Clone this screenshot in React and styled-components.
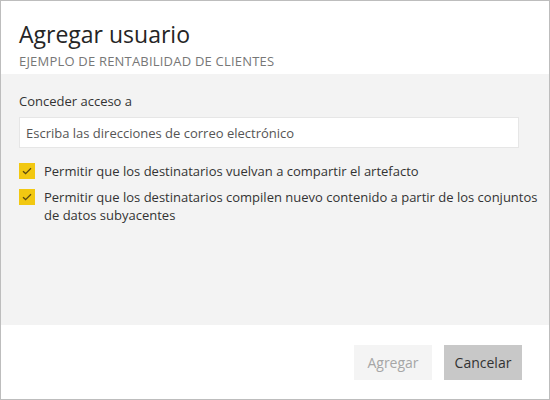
import React from 'react'
import styled, { createGlobalStyle } from 'styled-components'

const GlobalStyle = createGlobalStyle`
  html, body {
    margin: 0;
    padding: 0;
    background: #ffffff;
  }
  body {
    font-family: "Segoe UI", "Open Sans", "Noto Sans", sans-serif;
  }
`

const Dialog = styled.div`
  width: 550px;
  height: 400px;
  box-sizing: border-box;
  border: 1px solid #bdbdbd;
  background: #ffffff;
  display: flex;
  flex-direction: column;
`

const Header = styled.header`
  height: 73px;
  padding: 18px 18px 0;
  box-sizing: border-box;
`

const Title = styled.h1`
  margin: 0;
  font-size: 23px;
  font-weight: 400;
  line-height: 30px;
  color: #252525;
`

const Subtitle = styled.div`
  margin-top: 4px;
  font-size: 13px;
  letter-spacing: 0.2px;
  line-height: 16px;
  color: #777777;
  text-transform: uppercase;
`

const Body = styled.section`
  height: 251px;
  background: #f3f3f3;
  padding: 18px 4px 0 18px;
  box-sizing: border-box;
`

const Label = styled.div`
  font-size: 13px;
  line-height: 18px;
  color: #333333;
`

const Input = styled.input`
  display: block;
  width: 500px;
  height: 31px;
  margin: 7px 0 14px;
  box-sizing: border-box;
  border: 1px solid #e6e6e6;
  background: #ffffff;
  padding: 0 6px;
  font-family: inherit;
  font-size: 13px;
  color: #333333;
  outline: none;
  &::placeholder {
    color: #555555;
  }
`

const CheckList = styled.div`
  display: flex;
  flex-direction: column;
  gap: 8px;
`

const CheckRow = styled.label`
  display: flex;
  align-items: flex-start;
  gap: 9px;
  font-size: 13px;
  line-height: 18px;
  color: #333333;
`

const Box = styled.span`
  flex: 0 0 16px;
  width: 16px;
  height: 16px;
  margin-top: 1px;
  background: #f2c811;
  display: flex;
  align-items: center;
  justify-content: center;
`

const Footer = styled.footer`
  flex: 1;
  display: flex;
  justify-content: flex-end;
  align-items: flex-start;
  gap: 12px;
  padding: 20px 27px 0 0;
`

const Button = styled.button`
  width: 78px;
  height: 35px;
  border: none;
  font-family: inherit;
  font-size: 14px;
  background: ${p => (p.$primary ? '#f4f4f4' : '#c8c8c8')};
  color: ${p => (p.$primary ? '#a6a6a6' : '#333333')};
`

function Check({ children }) {
  return (
    <CheckRow>
      <Box>
        <svg width="10" height="8" viewBox="0 0 10 8">
          <path d="M1 4.2 L3.6 6.6 L9 1.2" fill="none" stroke="#5a4a10" strokeWidth="1.3" />
        </svg>
      </Box>
      <span>{children}</span>
    </CheckRow>
  )
}

export default function App() {
  return (
    <>
      <GlobalStyle />
      <Dialog>
        <Header>
          <Title>Agregar usuario</Title>
          <Subtitle>Ejemplo de rentabilidad de clientes</Subtitle>
        </Header>
        <Body>
          <Label>Conceder acceso a</Label>
          <Input placeholder="Escriba las direcciones de correo electrónico" />
          <CheckList>
            <Check>Permitir que los destinatarios vuelvan a compartir el artefacto</Check>
            <Check>
              Permitir que los destinatarios compilen nuevo contenido a partir de los conjuntos de datos subyacentes
            </Check>
          </CheckList>
        </Body>
        <Footer>
          <Button $primary disabled>Agregar</Button>
          <Button>Cancelar</Button>
        </Footer>
      </Dialog>
    </>
  )
}
